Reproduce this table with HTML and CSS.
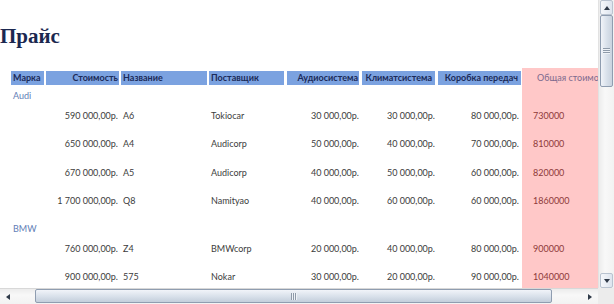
FILE: index.html
```html
<!DOCTYPE html>
<html lang="ru">
<head>
<meta charset="utf-8">
<title>Прайс</title>
<link rel="stylesheet" href="styles.css">
</head>
<body>
<div class="window">
  <div class="view">
    <h1 class="title">Прайс</h1>
    <div class="report">
      <div class="row hd">
        <div class="cell c1"><span class="bar">Марка</span></div>
        <div class="cell c2"><span class="bar r">Стоимость</span></div>
        <div class="cell c3"><span class="bar">Название</span></div>
        <div class="cell c4"><span class="bar">Поставщик</span></div>
        <div class="cell c5"><span class="bar r">Аудиосистема</span></div>
        <div class="cell c6"><span class="bar r">Климатсистема</span></div>
        <div class="cell c7"><span class="bar r">Коробка передач</span></div>
        <div class="cell total">Общая стоимость</div>
      </div>

      <div class="row grp"><div class="cell label">Audi</div><div class="cell total"></div></div>
      <div class="row data">
        <div class="cell"></div><div class="cell num">590 000,00р.</div><div class="cell txt">A6</div><div class="cell txt">Tokiocar</div><div class="cell num">30 000,00р.</div><div class="cell num">30 000,00р.</div><div class="cell num">80 000,00р.</div><div class="cell total">730000</div>
      </div>
      <div class="row data">
        <div class="cell"></div><div class="cell num">650 000,00р.</div><div class="cell txt">A4</div><div class="cell txt">Audicorp</div><div class="cell num">50 000,00р.</div><div class="cell num">40 000,00р.</div><div class="cell num">70 000,00р.</div><div class="cell total">810000</div>
      </div>
      <div class="row data">
        <div class="cell"></div><div class="cell num">670 000,00р.</div><div class="cell txt">A5</div><div class="cell txt">Audicorp</div><div class="cell num">40 000,00р.</div><div class="cell num">50 000,00р.</div><div class="cell num">60 000,00р.</div><div class="cell total">820000</div>
      </div>
      <div class="row data">
        <div class="cell"></div><div class="cell num">1 700 000,00р.</div><div class="cell txt">Q8</div><div class="cell txt">Namityao</div><div class="cell num">40 000,00р.</div><div class="cell num">60 000,00р.</div><div class="cell num">60 000,00р.</div><div class="cell total">1860000</div>
      </div>

      <div class="row grp"><div class="cell label">BMW</div><div class="cell total"></div></div>
      <div class="row data">
        <div class="cell"></div><div class="cell num">760 000,00р.</div><div class="cell txt">Z4</div><div class="cell txt">BMWcorp</div><div class="cell num">20 000,00р.</div><div class="cell num">40 000,00р.</div><div class="cell num">80 000,00р.</div><div class="cell total">900000</div>
      </div>
      <div class="row data">
        <div class="cell"></div><div class="cell num">900 000,00р.</div><div class="cell txt">575</div><div class="cell txt">Nokar</div><div class="cell num">30 000,00р.</div><div class="cell num">20 000,00р.</div><div class="cell num">90 000,00р.</div><div class="cell total">1040000</div>
      </div>
      <div class="row data">
        <div class="cell"></div><div class="cell"></div><div class="cell"></div><div class="cell"></div><div class="cell"></div><div class="cell"></div><div class="cell"></div><div class="cell total"></div>
      </div>
    </div>
  </div>

  <div class="vscroll">
    <div class="sbtn"><span class="tri up"></span></div>
    <div class="vthumb"><span class="grip v"></span></div>
    <div class="sbtn end"><span class="tri down"></span></div>
  </div>

  <div class="hscroll">
    <div class="hbtn"><span class="tri left"></span></div>
    <div class="hthumb"><span class="grip h"></span></div>
    <div class="hbtn end"><span class="tri right"></span></div>
  </div>

  <div class="corner"></div>
</div>
</body>
</html>
```

FILE: styles.css
```css
* { box-sizing: border-box; }

html, body {
  margin: 0;
  padding: 0;
  background: #ffffff;
}

.window {
  width: 614px;
  height: 304px;
  display: grid;
  grid-template-columns: 598px 16px;
  grid-template-rows: 288px 16px;
  overflow: hidden;
  font-family: Lato, "Open Sans", sans-serif;
}

.view {
  overflow: hidden;
  background: #ffffff;
}

.title {
  margin: 24px 0 20px 0;
  padding: 0;
  height: 24px;
  font-family: "Liberation Serif", serif;
  font-weight: bold;
  font-size: 21px;
  line-height: 24px;
  color: #1b2850;
}

.report {
  padding-left: 11px;
}

.row {
  display: grid;
  grid-template-columns: 35px 75px 88px 78px 75px 76px 84px 76px;
  font-size: 9px;
  line-height: 12px;
}

.row.hd { height: 20px; }
.row.grp { height: 19px; }
.row.data { height: 28.4px; }

.cell {
  white-space: nowrap;
  overflow: hidden;
  color: #3c3c3c;
}

.hd .cell { padding-top: 3px; }

.bar {
  display: block;
  height: 14px;
  line-height: 14px;
  background: #7ba2e0;
  color: #1c2b59;
  font-weight: bold;
  padding: 0 2px;
  margin-right: 2px;
}
.bar.r { text-align: right; padding-right: 1px; }
.c4 .bar, .c5 .bar, .c6 .bar { margin-right: 3px; }
.c6 .bar { padding-right: 3px; }
.c7 .bar { margin-right: 1px; padding-right: 3px; }

.hd .total {
  line-height: 14px;
  color: #7d6a8e;
  padding-left: 15px;
  font-weight: normal;
}

.total {
  background: #ffc8c8;
}

.grp .label {
  grid-column: 1 / 8;
  padding: 2px 0 0 2px;
  color: #5f7eb6;
}

.data .cell { padding-top: 3px; }
.data .num { text-align: right; padding-right: 3px; }
.data .txt { padding-left: 2px; }
.data .c3 { padding-left: 2px; }
.data .total { padding-left: 11px; color: #8e3a3a; }

/* vertical scrollbar */
.vscroll {
  grid-row: 1;
  grid-column: 2;
  display: flex;
  flex-direction: column;
  background: linear-gradient(to right, #ececec, #f8f8f8 40%, #f2f2f2);
  border-left: 1px solid #e2e2e2;
}

.sbtn {
  height: 15px;
  display: flex;
  align-items: center;
  justify-content: center;
  margin: 0 1px;
  border: 1px solid #b9c3d0;
  border-radius: 2px;
  background: linear-gradient(to right, #f6f8fb, #dde4ee);
}
.sbtn.end { margin-top: auto; }

.vthumb {
  height: 72px;
  margin: 0 1px;
  border: 1px solid #8f9db0;
  border-radius: 2px;
  background: linear-gradient(to right, #f1f4f9, #d8e0ea 55%, #c9d3df);
  display: flex;
  align-items: center;
  justify-content: center;
}

.grip.v {
  width: 7px;
  height: 6px;
  background: repeating-linear-gradient(to bottom, #8e9aa9 0 1px, #eef2f7 1px 2px);
}

/* horizontal scrollbar */
.hscroll {
  grid-row: 2;
  grid-column: 1;
  display: flex;
  align-items: stretch;
  background: linear-gradient(to bottom, #ececec, #f8f8f8 40%, #f2f2f2);
  border-top: 1px solid #d8d8d8;
}

.hbtn {
  width: 16px;
  display: flex;
  align-items: center;
  justify-content: center;
}
.hbtn.end { margin-left: auto; }

.hthumb {
  width: 517px;
  margin: 0 0 1px 19px;
  border: 1px solid #8f9db0;
  border-radius: 2px;
  background: linear-gradient(to bottom, #f1f4f9, #d8e0ea 55%, #c3cedb);
  display: flex;
  align-items: center;
  justify-content: center;
}

.grip.h {
  width: 6px;
  height: 7px;
  background: repeating-linear-gradient(to right, #8e9aa9 0 1px, #eef2f7 1px 2px);
}

.corner {
  grid-row: 2;
  grid-column: 2;
  background: #ececec;
}

.tri {
  width: 0;
  height: 0;
  border-style: solid;
}
.tri.up { border-width: 0 3.5px 4px 3.5px; border-color: transparent transparent #2f3a48 transparent; }
.tri.down { border-width: 4px 3.5px 0 3.5px; border-color: #2f3a48 transparent transparent transparent; }
.tri.left { border-width: 3.5px 4px 3.5px 0; border-color: transparent #2f3a48 transparent transparent; }
.tri.right { border-width: 3.5px 0 3.5px 4px; border-color: transparent transparent transparent #2f3a48; }
```
